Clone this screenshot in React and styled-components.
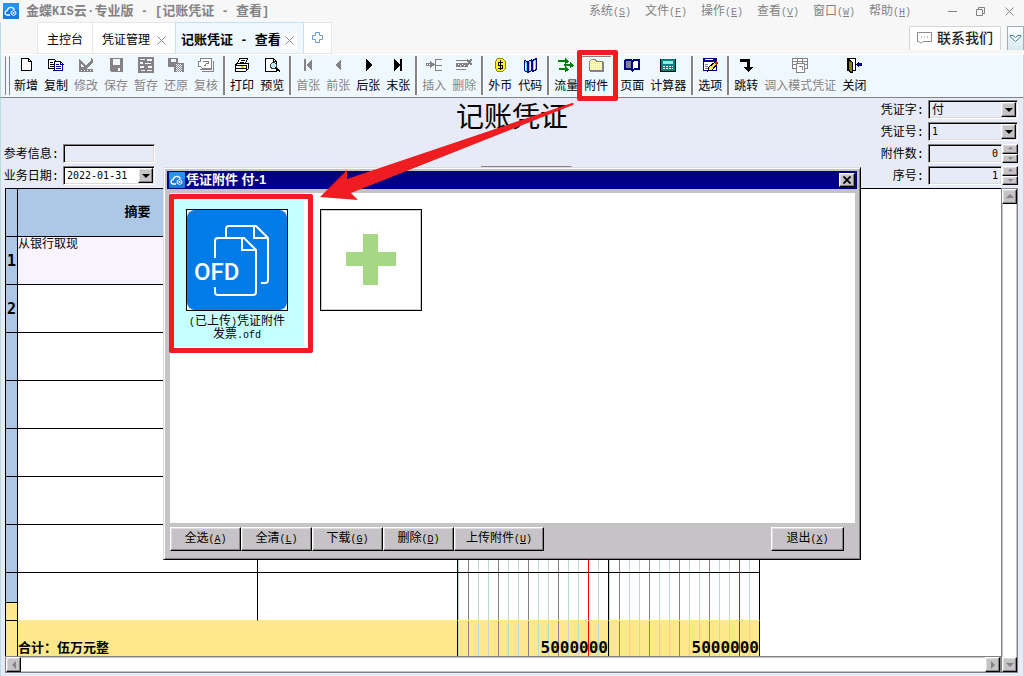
import React from 'react';
import styled, { createGlobalStyle, css } from 'styled-components';

const GlobalStyle = createGlobalStyle`
    * {
        box-sizing: border-box;
    }
    body {
        margin: 0;
        font-family: 'Liberation Mono', 'Noto Sans CJK SC', monospace;
        font-size: 12px;
        line-height: 14px;
        color: #000;
    }
    button, input, select {
        font: inherit;
        color: inherit;
        margin: 0;
        padding: 0;
        border-radius: 0;
    }
`;

const raised = css`
    background: #c6c3c6;
    border: 1px solid;
    border-color: #fff #000 #000 #fff;
    box-shadow: inset -1px -1px #848284, inset 1px 1px #dedbde;
`;

const sunken = css`
    border: 1px solid;
    border-color: #848284 #fff #fff #848284;
    box-shadow: inset 1px 1px #000, inset -1px -1px #dedbde;
`;

const Page = styled.div`
    position: relative;
    display: flex;
    flex-direction: column;
    min-height: 100vh;
    background: #e7ebf7;
    overflow: hidden;
`;

/* title bar */

const TitleBar = styled.header`
    display: flex;
    align-items: center;
    height: 22px;
    padding: 0 10px 0 3px;
    background: #f7f7f7;
    color: #848284;
`;

const AppTitle = styled.h1`
    flex: 1;
    margin: 0 0 0 7px;
    padding-top: 2px;
    font-size: 13px;
    font-weight: bold;
    line-height: 16px;
    white-space: pre;
`;

const Latin = styled.span`
    font-size: 12px;
`;

const Half = styled.span`
    font-size: 10px;
    white-space: pre;
`;

const Menu = styled.nav`
    display: flex;
    margin-right: 13px;
    padding-top: 2px;
`;

const MenuButton = styled.button`
    width: 56px;
    border: 0;
    background: none;
    text-align: left;
    white-space: nowrap;
`;

const WindowButton = styled.button`
    display: flex;
    justify-content: center;
    width: 28px;
    border: 0;
    background: none;
    &:last-child {
        justify-content: flex-end;
        width: 20px;
    }
`;

/* tabs */

const TabBar = styled.div`
    display: flex;
    align-items: flex-end;
    height: 32px;
    background: #f7f7f7;
    border-left: 1px solid #bddbde;
    padding-left: 36px;
`;

const TabList = styled.div`
    display: flex;
    flex: 1;
    height: 32px;
`;

const Tab = styled.div`
    display: flex;
    align-items: center;
    gap: ${(p) => (p.$active ? '1px' : '6px')};
    height: 32px;
    padding: ${(p) => (p.$active ? '5px 6px 0 5px' : '5px 9px 0 9px')};
    background: ${(p) => (p.$active ? '#eff7ff' : '#fff')};
    border: 1px solid ${(p) => (p.$active ? '#bde3ff' : '#e7e7e7')};
    border-bottom-color: #e7e7e7;
    border-left-width: ${(p) => (p.$active || p.$first ? '1px' : '0')};
    border-right-width: ${(p) => (p.$last ? '0' : '1px')};
`;

const TabButton = styled.button`
    border: 0;
    background: none;
    white-space: pre;
    font-size: ${(p) => (p.$active ? '13px' : '12px')};
    font-weight: ${(p) => (p.$active ? 'bold' : 'normal')};
`;

const TabClose = styled.button`
    display: flex;
    align-items: center;
    justify-content: center;
    width: ${(p) => (p.$boxed ? '15px' : '10px')};
    height: 16px;
    border: 0;
    background: ${(p) => (p.$boxed ? '#fff' : 'none')};
`;

const NewTab = styled.button`
    width: 28px;
    height: 32px;
    padding-top: 2px;
    border: 1px solid #e7e7e7;
    border-left: 0;
    background: #fff;
`;

const Contact = styled.button`
    display: flex;
    align-items: center;
    gap: 5px;
    height: 24px;
    margin: 0 6px 4px 0;
    padding: 0 7px;
    border: 1px solid #d6d3d6;
    border-bottom: 0;
    border-radius: 2px 2px 0 0;
    background: #fff;
    color: #222;
    font-size: 14px;
    font-weight: 500;
    white-space: nowrap;
`;

const Fold = styled.button`
    display: flex;
    align-items: center;
    justify-content: center;
    width: 17px;
    height: 24px;
    margin-bottom: 4px;
    border: 1px solid #9cb2b5;
    border-bottom: 0;
    background: linear-gradient(#fff, #d6ebef);
`;

/* toolbar */

const Toolbar = styled.div`
    display: flex;
    height: 44px;
    padding: 1px 0 1px 4px;
    background: #eff7ff;
    border-top: 1px solid #fff;
    border-bottom: 1px solid #848284;
    border-left: 1px solid #bddbde;
    border-right: 1px solid #bddbde;
`;

const Grip = styled.div`
    width: 6px;
    margin-right: ${(p) => (p.$last ? '-4px' : '-2px')};
    margin-bottom: 1px;
    border-left: 1px solid #848284;
    border-top: 1px solid #fff;
`;

const Separator = styled.div`
    width: 6px;
    padding-left: 2px;
    &::before {
        content: '';
        display: block;
        width: 2px;
        height: 39px;
        background: #848284;
        border-right: 1px solid #fff;
    }
`;

const Tool = styled.button`
    position: relative;
    display: flex;
    flex-direction: column;
    align-items: center;
    gap: 7px;
    min-width: 30px;
    height: 40px;
    padding: 1px 3px 0;
    border: 0;
    background: none;
    white-space: nowrap;
    color: ${(p) => (p.disabled ? '#848284' : '#000')};
    text-shadow: ${(p) => (p.disabled ? '1px 1px #fff' : 'none')};
    ${(p) =>
        p.$pressed &&
        css`
            box-shadow: inset 0 1px #848284, inset 1px 0 #848284, inset -1px -1px #fff;
        `}
`;

const RedFrame = styled.span`
    position: absolute;
    inset: ${(p) => p.$inset};
    border: 5px solid #ef1c21;
    border-radius: 2px;
    pointer-events: none;
    z-index: 5;
`;

/* voucher head */

const VoucherHead = styled.section`
    display: flex;
    justify-content: space-between;
    align-items: flex-end;
    height: 90px;
    padding: 0 5px;
    border-left: 1px solid #bddbde;
    border-right: 1px solid #bddbde;
`;

const Fields = styled.div`
    display: flex;
    flex-direction: column;
    gap: 3px;
    width: 149px;
    padding-bottom: 3px;
`;

const HeadCenter = styled.div`
    display: flex;
    flex-direction: column;
    align-items: center;
    align-self: stretch;
    justify-content: space-between;
    padding: 8px 0 3px;
`;

const VoucherTitle = styled.h2`
    margin: 0;
    font-size: 28px;
    font-weight: 400;
    line-height: 28px;
`;

const CenterField = styled.div`
    width: 91px;
    margin-left: 28px;
`;

const Field = styled.div`
    display: flex;
    align-items: center;
    justify-content: flex-end;
    height: 19px;
    white-space: nowrap;
    label {
        flex: 1;
        padding: 2px 4px 0 0;
        text-align: ${(p) => (p.$right ? 'right' : 'left')};
    }
`;

const TextBox = styled.input`
    ${sunken}
    flex: none;
    width: ${(p) => p.$width};
    height: 19px;
    padding: 0 3px;
    background: transparent;
    text-align: ${(p) => p.$align || 'left'};
    font-family: 'DejaVu Sans Mono', monospace;
    font-size: 10px;
    outline: none;
`;

const ComboWrap = styled.div`
    position: relative;
    flex: none;
    width: ${(p) => p.$width};
    height: 19px;
`;

const ComboSelect = styled.select`
    ${sunken}
    display: block;
    appearance: none;
    width: 100%;
    height: 19px;
    padding: ${(p) => (p.$cjk ? '2px 16px 0 3px' : '0 16px 0 3px')};
    background: ${(p) => (p.$white ? '#fff' : 'transparent')};
    font-family: 'DejaVu Sans Mono', 'Noto Sans CJK SC', monospace;
    font-size: ${(p) => (p.$cjk ? '12px' : '10px')};
    line-height: 15px;
    outline: none;
`;

const ComboArrow = styled.span`
    ${raised}
    position: absolute;
    top: 2px;
    right: 2px;
    width: 15px;
    height: 15px;
    display: flex;
    align-items: center;
    justify-content: center;
    pointer-events: none;
`;

const Spinner = styled.div`
    display: flex;
    flex-direction: column;
    width: 16px;
    height: 19px;
`;

const SpinButton = styled.button`
    ${raised}
    display: flex;
    flex: 1;
    min-height: 0;
    align-items: center;
    justify-content: center;
`;

/* sheet */

const SheetArea = styled.main`
    display: flex;
    flex: 1;
    padding: 0 5px 3px 4px;
    border-left: 1px solid #bddbde;
    border-right: 1px solid #bddbde;
`;

const Sheet = styled.div`
    display: flex;
    flex: 1;
    flex-direction: column;
    min-width: 0;
`;

const SheetBody = styled.div`
    flex: 1;
    background: #fff;
    border-top: 1px solid #000;
`;

const Table = styled.table`
    table-layout: fixed;
    width: 755px;
    border-collapse: separate;
    border-spacing: 0;
    th, td {
        padding: 0;
        height: 48px;
        border-right: 1px solid #000;
        border-bottom: 1px solid #000;
    }
`;

const HeadCell = styled.th`
    background: #adc7e7;
    font-size: 13px;
`;

const IndexCell = styled.th`
    && {
        border-left: 1px solid #000;
    }
    background: ${(p) =>
        p.$total ? '#ffe78c' : p.$last ? 'linear-gradient(#adc7e7 29px, #000 29px 30px, #ffe78c 30px)' : '#adc7e7'};
    font-family: 'DejaVu Sans Mono', monospace;
    font-size: 15px;
    text-align: center;
`;

const TextCell = styled.td`
    vertical-align: top;
    background: ${(p) => (p.$current ? '#f7f3ff' : '#fff')};
    && {
        padding-top: 1px;
        border-bottom-color: ${(p) => (p.$last ? '#ffe78c' : '#000')};
    }
`;

const line = (x, color) => `linear-gradient(${color}, ${color}) ${x}px 0 / 1px 100% no-repeat`;

const rules = [
    line(130, '#f00'),
    ...[10, 40, 70, 100].map((x) => line(x, '#848284')),
    ...[0, 20, 30, 50, 60, 80, 90, 110, 120, 140].map((x) => line(x, '#bddbd6')),
].join(', ');

const MoneyCell = styled.td`
    background: ${rules}, ${(p) => (p.$total ? '#ffe78c' : '#fff')};
    && {
        border-bottom-color: ${(p) => (p.$last ? '#ffe78c' : '#000')};
    }
`;

const TotalRow = styled.tr`
    && th, && td {
        height: 35px;
        border-bottom: 0;
        vertical-align: bottom;
    }
`;

const TotalText = styled.td`
    background: #ffe78c;
    font-size: 13px;
    font-weight: bold;
    line-height: 15px;
`;

const TotalMoney = styled(MoneyCell)`
    font-family: 'DejaVu Sans Mono', monospace;
    font-size: 16px;
    font-weight: bold;
    line-height: 16px;
    text-align: right;
`;

const ScrollBar = styled.div`
    display: flex;
    flex-direction: ${(p) => (p.$vertical ? 'column' : 'row')};
    justify-content: space-between;
    ${(p) => (p.$vertical ? 'width: 17px;' : 'height: 17px;')}
    background: #fff;
    border: 1px solid #848284;
    box-shadow: inset 1px 1px #c6c3c6, inset -1px -1px #c6c3c6;
`;

const ScrollButton = styled.button`
    ${raised}
    display: flex;
    align-items: center;
    justify-content: center;
    width: 15px;
    height: 15px;
`;

/* attachment dialog */

const Dialog = styled.section`
    position: absolute;
    top: 167px;
    left: 163px;
    right: 163px;
    padding: 3px;
    background: #c6c3c6;
    border: 1px solid;
    border-color: #dedbde #000 #000 #dedbde;
    box-shadow: inset 1px 1px #fff, inset -1px -1px #848284;
`;

const Caption = styled.div`
    display: flex;
    align-items: center;
    height: 18px;
    padding: 0 2px;
    background: #000084;
    color: #fff;
    h3 {
        flex: 1;
        margin: 0 0 0 1px;
        font-family: 'Liberation Sans', 'Noto Sans CJK SC', sans-serif;
        font-size: 13px;
        line-height: 18px;
    }
`;

const CaptionClose = styled.button`
    ${raised}
    display: flex;
    align-items: center;
    justify-content: center;
    width: 16px;
    height: 14px;
`;

const Files = styled.div`
    display: flex;
    align-items: flex-start;
    height: 330px;
    margin: 4px 2px 4px 3px;
    background: #fff;
`;

const FileTile = styled.figure`
    position: relative;
    width: 134px;
    margin: 0;
    padding: 16px 16px 5px;
    background: ${(p) => (p.$selected ? '#c6ffff' : '#fff')};
    figcaption {
        margin-top: 5px;
        line-height: 12px;
        text-align: center;
        white-space: nowrap;
    }
`;

const Thumb = styled.div`
    width: 102px;
    height: 102px;
    border: 1px solid #000;
    background: #fff;
    svg {
        display: block;
    }
`;

const AddButton = styled.button`
    display: flex;
    align-items: center;
    justify-content: center;
    width: 102px;
    height: 102px;
    border: 1px solid #000;
    background: #fff;
    box-shadow: inset 0 0 0 1px #c6cfc6;
`;

const Actions = styled.div`
    display: flex;
    padding: 0 13px 5px 3px;
`;

const ActionButton = styled.button`
    ${raised}
    height: 24px;
    width: ${(p) => p.$width || '71px'};
    padding-top: 1px;
    margin-left: ${(p) => (p.$end ? 'auto' : '0')};
    white-space: nowrap;
`;

const Arrow = styled.svg`
    position: absolute;
    left: 318px;
    top: 100px;
    pointer-events: none;
    z-index: 6;
`;

const icons = {
    add: (
        <>
            <path d="M3.5 1.5h7l3 3v9h-10z" fill="#fff" stroke="#000" />
            <path d="M10.5 1.5v3h3" fill="none" stroke="#000" />
        </>
    ),
    copy: (
        <>
            <path d="M.5 2.5h6l2 2v7h-8z" fill="#fff" stroke="#000" />
            <path d="M2 5h3M2 7h4M2 9h4" stroke="#000" />
            <path d="M6.5 4.5h6l2 2v7h-8.500z" fill="#fff" stroke="#000084" />
            <path d="M8 7.5h3M8 9.5h5M8 11.5h5M12.5 4v3h3" fill="none" stroke="#000084" />
        </>
    ),
    edit: (
        <>
            <path d="M1 1l7 8 5-6 2 2-6 7H1z" fill="#848284" />
            <path d="M12 2l1-1 2 2-1 1z" fill="#848284" />
            <path d="M3 7v3h3z" fill="#eff7ff" />
            <path d="M1 12h14v3H1z" fill="#848284" />
            <path d="M3 13h1v1H3zM6 13h1v1H6zM9 13h1v1H9zM12 13h1v1h-1z" fill="#fff" />
        </>
    ),
    save: (
        <>
            <path d="M2 1h13v14H3l-1-1z" fill="#848284" />
            <path d="M5 2h7v6H5zM10 11h2v3h-2z" fill="#eff7ff" />
        </>
    ),
    stash: (
        <>
            <path d="M0 0h16v16H0z" fill="#848284" />
            <path d="M2 2h5v1H2zM9 2h5v2H9zM2 5h3v2H2zM7 6h6v1H7zM2 9h4v2H2zM10 9h4v2h-4zM3 13h4v1H3zM9 13h5v1H9z" fill="#eff7ff" />
        </>
    ),
    restore: (
        <>
            <path d="M0 1h10v9H0z" fill="#848284" />
            <path d="M3 2h5v3H3z" fill="#eff7ff" />
            <path d="M6 6h10v9H6z" fill="#848284" />
            {[7, 9, 11, 13].map((y) => (
                <path key={y} d={`M8 ${y}h1v1H8zM10 ${y}h1v1h-1zM12 ${y}h1v1h-1zM9 ${y + 1}h1v1H9zM11 ${y + 1}h1v1h-1zM13 ${y + 1}h1v1h-1z`} fill="#eff7ff" />
            ))}
        </>
    ),
    review: (
        <>
            <path d="M4 14.5h11.500V4M2 12.500h12" fill="none" stroke="#848284" />
            <path d="M2.500 1.500h11v10h-9l-2-2h-2v-5h2z" fill="#fff" stroke="#848284" />
            <path d="M5 4.500h5v2H8.500L6.500 9" fill="none" stroke="#848284" />
        </>
    ),
    print: (
        <>
            <path d="M5.5 1.5h8l-2 5h-8z" fill="#fff" stroke="#000" />
            <path d="M7 3.5h4M6 5.5h4" stroke="#000" />
            <path d="M1.5 7.5l2-1h11v5l-3 3h-10z" fill="#fff" stroke="#000" />
            <path d="M1 8.5h11M1 11.5h11M12.5 8v6M14 8v4" stroke="#000" />
            <path d="M7 10h3" stroke="#e7d700" strokeWidth="2" />
            <path d="M3 14.5h9" stroke="#000" />
        </>
    ),
    preview: (
        <>
            <path d="M1.5 1.5h8l3 3v10h-11z" fill="#fff" stroke="#000" />
            <path d="M9.5 1.5v3h3" fill="none" stroke="#000" />
            <circle cx="9.5" cy="8.5" r="3" fill="#bde7ef" stroke="#444" />
            <path d="M11.5 10.5l4.500 4" stroke="#000" strokeWidth="2" />
        </>
    ),
    first: <path d="M4 2h2v12H4zM12 2v12L6 8z" fill="#848284" />,
    prev: <path d="M11 2v12L5 8z" fill="#848284" />,
    next: <path d="M6 2v12l6-6z" fill="#000" />,
    last: <path d="M4 2v12l6-6zM10 2h2v12h-2z" fill="#000" />,
    insert: (
        <>
            <path d="M15.5 2.5h-6v11h6M9 8.5h7" fill="none" stroke="#848284" />
            <path d="M0 6h4V4l5 3.500L4 11V9H0z" fill="#848284" />
            <path d="M1 7h1v1H1zM3 7h1v1H3z" fill="#fff" />
        </>
    ),
    remove: (
        <>
            <path d="M0 3.5h10M0 12.5h10" stroke="#848284" />
            <path d="M11 3l5 5M16 2l-6 7" fill="none" stroke="#848284" strokeWidth="2" />
            <path d="M0 6h12v4H0z" fill="#848284" />
            <path d="M2 7h1v1H2zM4 8h1v1H4zM6 7h1v1H6zM8 8h1v1H8z" fill="#fff" />
        </>
    ),
    currency: (
        <>
            <path d="M5.5 1.5h5l3 3v7l-3 3h-5l-2-3v-7z" fill="#ffff00" stroke="#848200" />
            <path d="M11 5H6.5v3h4v3H6M8.5 3v10" fill="none" stroke="#000" />
        </>
    ),
    code: (
        <>
            <path d="M2.5 3.5l3 1v11l-3-2zM6.5 4.5l3-2v11l-3 2zM10.5 3.5l4-2v11l-4 2z" fill="#4ae3e7" stroke="#000084" />
            <path d="M3.5 6v7M8 5v8M12.5 4v9" stroke="#fff" />
        </>
    ),
    flow: <path d="M0 3h7V1l4 3.500-4 3V5H0zM6 7h6V5l4 3.500-4 3V9H6zM1 11h6V9l4 3.500-4 3V13H1z" fill="#008200" />,
    attach: (
        <>
            <path d="M1.5 4.5l2-2h4l1 2h6v9h-13z" fill="#ffffb5" stroke="#848284" />
            <path d="M3 6.5h11M3 8.5h11M3 10.5h11M3 12.5h11" stroke="#ffef42" strokeDasharray="1 1" />
            <path d="M15.5 5v9.500H2" fill="none" stroke="#848284" />
        </>
    ),
    page: (
        <>
            <path d="M0 3l1-1h6l1 1 1-1h6l1 1v10h-6l-2 2-2-2H0z" fill="#000084" />
            <path d="M2 4h4l1 1v7l-1-1H2z" fill="#848284" />
            <path d="M9 5l1-1h4v7h-4l-1 1z" fill="#fff" />
        </>
    ),
    calc: (
        <>
            <path d="M1 2h14v12H1z" fill="#008284" />
            <path d="M.5 2v12.500h15V2" fill="none" stroke="#000" />
            <path d="M3 4h10v3H3z" fill="#9ce3de" />
            <path d="M3 9.5h10M3 11.5h10" stroke="#fff" strokeDasharray="2 1" />
        </>
    ),
    options: (
        <>
            <path d="M1.5 1.5h13v12h-13z" fill="#fff" stroke="#000084" />
            <path d="M1 1h14v4H1z" fill="#000084" />
            <path d="M3 2h8v1H3z" fill="#fff" />
            <path d="M3 7.5h3M3 9.5h3M3 11.5h4" stroke="#848284" />
            <path d="M6 14l1-4 6-5 2 2-5 6z" fill="#ffe742" stroke="#000" />
            <path d="M12 6l2-2 2 2-2 2z" fill="#f00" />
        </>
    ),
    jump: <path d="M2 2h10v8h3l-4.500 5L6 10h3V5H2z" fill="#000" />,
    pattern: (
        <>
            <path d="M.5 1.5h15v10h-15z" fill="#fff" stroke="#848284" />
            <path d="M0 4.5h15M5.5 1v11M10.5 1v11M0 7.5h15" stroke="#848284" />
            <path d="M4.5 6.5h8v9h-8z" fill="#fff" stroke="#848284" />
            <path d="M7 9.5h3v3" fill="none" stroke="#848284" />
        </>
    ),
    close: (
        <>
            <path d="M1.5 1.5h8v12h-8z" fill="#fff" stroke="#000" />
            <path d="M2 2l4 3v11l-4-3z" fill="#848200" stroke="#000" />
            <path d="M16 6h-3V4L9.5 7.5 13 11V9h3z" fill="#000084" />
        </>
    ),
};

const tools = [
    { id: 'add', label: '新增' },
    { id: 'copy', label: '复制' },
    { id: 'edit', label: '修改', off: true },
    { id: 'save', label: '保存', off: true },
    { id: 'stash', label: '暂存', off: true },
    { id: 'restore', label: '还原', off: true },
    { id: 'review', label: '复核', off: true, end: true },
    { id: 'print', label: '打印' },
    { id: 'preview', label: '预览', end: true },
    { id: 'first', label: '首张', off: true },
    { id: 'prev', label: '前张', off: true },
    { id: 'next', label: '后张' },
    { id: 'last', label: '末张', end: true },
    { id: 'insert', label: '插入', off: true },
    { id: 'remove', label: '删除', off: true, end: true },
    { id: 'currency', label: '外币' },
    { id: 'code', label: '代码', end: true },
    { id: 'flow', label: '流量' },
    { id: 'attach', label: '附件', pressed: true, end: true },
    { id: 'page', label: '页面' },
    { id: 'calc', label: '计算器', end: true },
    { id: 'options', label: '选项', end: true },
    { id: 'jump', label: '跳转' },
    { id: 'pattern', label: '调入模式凭证', off: true },
    { id: 'close', label: '关闭' },
];

const menus = [
    ['系统', 'S'],
    ['文件', 'F'],
    ['操作', 'E'],
    ['查看', 'V'],
    ['窗口', 'W'],
    ['帮助', 'H'],
];

const HotLabel = ({ text, hot }) => (
    <>
        {text}
        <Half>
            (<u>{hot}</u>)
        </Half>
    </>
);

const Logo = () => (
    <svg width="16" height="16" viewBox="0 0 16 16">
        <rect width="16" height="16" rx="1" fill="#1879de" />
        <rect width="16" height="7" rx="1" fill="#2992ef" />
        <path d="M7 12H4.500a2.200 2.200 0 0 1-.3-4.400 3.800 3.800 0 0 1 7.300-.8" fill="none" stroke="#fff" strokeWidth="1.300" />
        <path d="M10.500 7.500l2.300 1.200v2.600l-2.300 1.200-2.300-1.200V8.700z" fill="none" stroke="#fff" />
        <circle cx="10.500" cy="10" r="1" fill="#fff" />
    </svg>
);

const Cross = ({ size = 9, color = '#8c8a8c', width = 1 }) => (
    <svg width={size} height={size} viewBox="0 0 9 9">
        <path d="M.5 .5l8 8M8.5 .5l-8 8" stroke={color} strokeWidth={width} />
    </svg>
);

const triangles = { up: 'M0 5L4 1l4 4z', down: 'M0 2h8L4 6z', left: 'M6 0v8L2 4z', right: 'M2 0v8l4-4z' };

const Triangle = ({ dir, color = '#848284', size = 8 }) => (
    <svg width={size} height={size} viewBox="0 0 8 8">
        <path d={triangles[dir]} fill={color} />
    </svg>
);

const Combo = ({ id, width, value, white, cjk }) => (
    <ComboWrap $width={width}>
        <ComboSelect id={id} defaultValue={value} $white={white} $cjk={cjk}>
            <option>{value}</option>
        </ComboSelect>
        <ComboArrow>
            <Triangle dir="down" color="#000" />
        </ComboArrow>
    </ComboWrap>
);

const NumberField = ({ id, label, value }) => (
    <Field $right>
        <label htmlFor={id}>{label}</label>
        <TextBox id={id} $width="74px" $align="right" defaultValue={value} />
        <Spinner>
            <SpinButton>
                <Triangle dir="up" size={5} />
            </SpinButton>
            <SpinButton>
                <Triangle dir="down" size={5} />
            </SpinButton>
        </Spinner>
    </Field>
);

const rows = [
    { no: '1', summary: '从银行取现' },
    { no: '2' },
    {},
    {},
    {},
    {},
    {},
    {},
];

export default function App() {
    return (
        <Page>
            <GlobalStyle />
            <TitleBar>
                <Logo />
                <AppTitle>
                    金蝶<Latin>KIS</Latin>云·专业版<Latin> - [</Latin>记账凭证<Latin> - </Latin>查看<Latin>]</Latin>
                </AppTitle>
                <Menu>
                    {menus.map(([text, hot]) => (
                        <MenuButton key={hot}>
                            <HotLabel text={text} hot={hot} />
                        </MenuButton>
                    ))}
                </Menu>
                <WindowButton>
                    <svg width="9" height="9" viewBox="0 0 9 9">
                        <path d="M0 4.5h9" stroke="#848284" />
                    </svg>
                </WindowButton>
                <WindowButton>
                    <svg width="9" height="9" viewBox="0 0 9 9">
                        <path d="M.5 2.5h6v6h-6zM2.5 2V.5h6v6H7" fill="none" stroke="#848284" />
                    </svg>
                </WindowButton>
                <WindowButton>
                    <Cross />
                </WindowButton>
            </TitleBar>

            <TabBar>
                <TabList>
                    <Tab $first>
                        <TabButton>主控台</TabButton>
                    </Tab>
                    <Tab $last>
                        <TabButton>凭证管理</TabButton>
                        <TabClose>
                            <Cross />
                        </TabClose>
                    </Tab>
                    <Tab $active>
                        <TabButton $active>
                            记账凭证<Latin> - </Latin>查看
                        </TabButton>
                        <TabClose $boxed>
                            <Cross />
                        </TabClose>
                    </Tab>
                    <NewTab>
                        <svg width="11" height="11" viewBox="0 0 11 11">
                            <path d="M3.5 .5h4v3h3v4h-3v3h-4v-3h-3v-4h3z" fill="#fff" stroke="#6b9ade" />
                        </svg>
                    </NewTab>
                </TabList>
                <Contact>
                    <svg width="15" height="13" viewBox="0 0 15 13">
                        <path d="M.5 .5h14v9H6l-2 2-2-2H.500z" fill="none" stroke="#8c8a8c" />
                        <path d="M4 5h1M7 5h1M10 5h1" stroke="#8c8a8c" />
                    </svg>
                    联系我们
                </Contact>
                <Fold>
                    <svg width="13" height="9" viewBox="0 0 13 9">
                        <path d="M1 1.5h3l2.500 2 2.500-2h3v1l-5.500 5L1 2.500z" fill="#fff" stroke="#397d8c" />
                    </svg>
                </Fold>
            </TabBar>

            <Toolbar>
                <Grip />
                <Grip $last />
                {tools.map((t) => (
                    <React.Fragment key={t.id}>
                        <Tool disabled={t.off} $pressed={t.pressed}>
                            <svg width="16" height="16" viewBox="0 0 16 16" shapeRendering="crispEdges">
                                {icons[t.id]}
                            </svg>
                            {t.label}
                            {t.pressed && <RedFrame $inset="-6px -7px -5px -4px" />}
                        </Tool>
                        {t.end && <Separator />}
                    </React.Fragment>
                ))}
            </Toolbar>

            <VoucherHead>
                <Fields>
                    <Field>
                        <label htmlFor="ref">参考信息:</label>
                        <TextBox id="ref" $width="92px" />
                    </Field>
                    <Field>
                        <label htmlFor="date">业务日期:</label>
                        <Combo id="date" width="92px" value="2022-01-31" white />
                    </Field>
                </Fields>
                <HeadCenter>
                    <VoucherTitle>记账凭证</VoucherTitle>
                    <CenterField>
                        <TextBox $width="91px" />
                    </CenterField>
                </HeadCenter>
                <Fields>
                    <Field $right>
                        <label htmlFor="word">凭证字:</label>
                        <Combo id="word" width="90px" value="付" cjk />
                    </Field>
                    <Field $right>
                        <label htmlFor="number">凭证号:</label>
                        <Combo id="number" width="90px" value="1" />
                    </Field>
                    <NumberField id="count" label="附件数:" value="0" />
                    <NumberField id="serial" label="序号:" value="1" />
                </Fields>
            </VoucherHead>

            <SheetArea>
                <Sheet>
                    <SheetBody>
                        <Table>
                            <colgroup>
                                <col style={{ width: 13 }} />
                                <col style={{ width: 240 }} />
                                <col style={{ width: 200 }} />
                                <col style={{ width: 151 }} />
                                <col style={{ width: 151 }} />
                            </colgroup>
                            <thead>
                                <tr>
                                    <IndexCell />
                                    <HeadCell>摘要</HeadCell>
                                    <HeadCell />
                                    <HeadCell />
                                    <HeadCell />
                                </tr>
                            </thead>
                            <tbody>
                                {rows.map((row, i) => {
                                    const last = i === rows.length - 1;
                                    return (
                                        <tr key={i}>
                                            <IndexCell $last={last}>{row.no}</IndexCell>
                                            <TextCell $current={i === 0} $last={last}>
                                                {row.summary}
                                            </TextCell>
                                            <TextCell $current={i === 0} $last={last} />
                                            <MoneyCell $last={last} />
                                            <MoneyCell $last={last} />
                                        </tr>
                                    );
                                })}
                            </tbody>
                            <tfoot>
                                <TotalRow>
                                    <IndexCell $total />
                                    <TotalText colSpan={2}>合计：伍万元整</TotalText>
                                    <TotalMoney $total>5000000</TotalMoney>
                                    <TotalMoney $total>5000000</TotalMoney>
                                </TotalRow>
                            </tfoot>
                        </Table>
                    </SheetBody>
                    <ScrollBar>
                        <ScrollButton>
                            <Triangle dir="left" />
                        </ScrollButton>
                        <ScrollButton>
                            <Triangle dir="right" />
                        </ScrollButton>
                    </ScrollBar>
                </Sheet>
                <ScrollBar $vertical>
                    <ScrollButton>
                        <Triangle dir="up" />
                    </ScrollButton>
                    <ScrollButton>
                        <Triangle dir="down" />
                    </ScrollButton>
                </ScrollBar>
            </SheetArea>

            <Dialog>
                <Caption>
                    <Logo />
                    <h3>凭证附件 付-1</h3>
                    <CaptionClose>
                        <Cross size={8} color="#000" width={2} />
                    </CaptionClose>
                </Caption>
                <Files>
                    <FileTile $selected>
                        <Thumb>
                            <svg width="100" height="100" viewBox="0 0 100 100">
                                <rect width="100" height="100" rx="8" fill="#007be7" />
                                <g fill="none" stroke="#fff" strokeWidth="2">
                                    <path d="M39 27V19q0-3 3-3h27l12 12v42q0 3-3 3h-4" />
                                    <path d="M67 16v12h14" />
                                    <path d="M28 48V31q0-3 3-3h26l12 12v42q0 3-3 3H31q-3 0-3-3v-5" />
                                    <path d="M55 28v12h14" />
                                </g>
                                <text x="7" y="70" fill="#fff" fontFamily="Roboto, sans-serif" fontSize="24" fontWeight="500">
                                    OFD
                                </text>
                            </svg>
                        </Thumb>
                        <figcaption>
                            <Half>(</Half>已上传<Half>)</Half>凭证附件
                            <br />
                            发票<Half>.ofd</Half>
                        </figcaption>
                        <RedFrame $inset="1px -9px -6px -1px" />
                    </FileTile>
                    <FileTile>
                        <AddButton>
                            <svg width="50" height="52" viewBox="0 0 50 52">
                                <path d="M17 0h15v18h18v14H32v19H17V32H0V18h17z" fill="#a5d784" />
                            </svg>
                        </AddButton>
                    </FileTile>
                </Files>
                <Actions>
                    <ActionButton>
                        <HotLabel text="全选" hot="A" />
                    </ActionButton>
                    <ActionButton>
                        <HotLabel text="全清" hot="L" />
                    </ActionButton>
                    <ActionButton>
                        <HotLabel text="下载" hot="G" />
                    </ActionButton>
                    <ActionButton>
                        <HotLabel text="删除" hot="D" />
                    </ActionButton>
                    <ActionButton $width="90px">
                        <HotLabel text="上传附件" hot="U" />
                    </ActionButton>
                    <ActionButton $width="73px" $end>
                        <HotLabel text="退出" hot="X" />
                    </ActionButton>
                </Actions>
            </Dialog>

            <Arrow width="260" height="104" viewBox="0 0 260 104">
                <path d="M2 97L29 70v9L254 3q3 0 1 2L33 93l7 7z" fill="#ef1c21" />
            </Arrow>
        </Page>
    );
}
